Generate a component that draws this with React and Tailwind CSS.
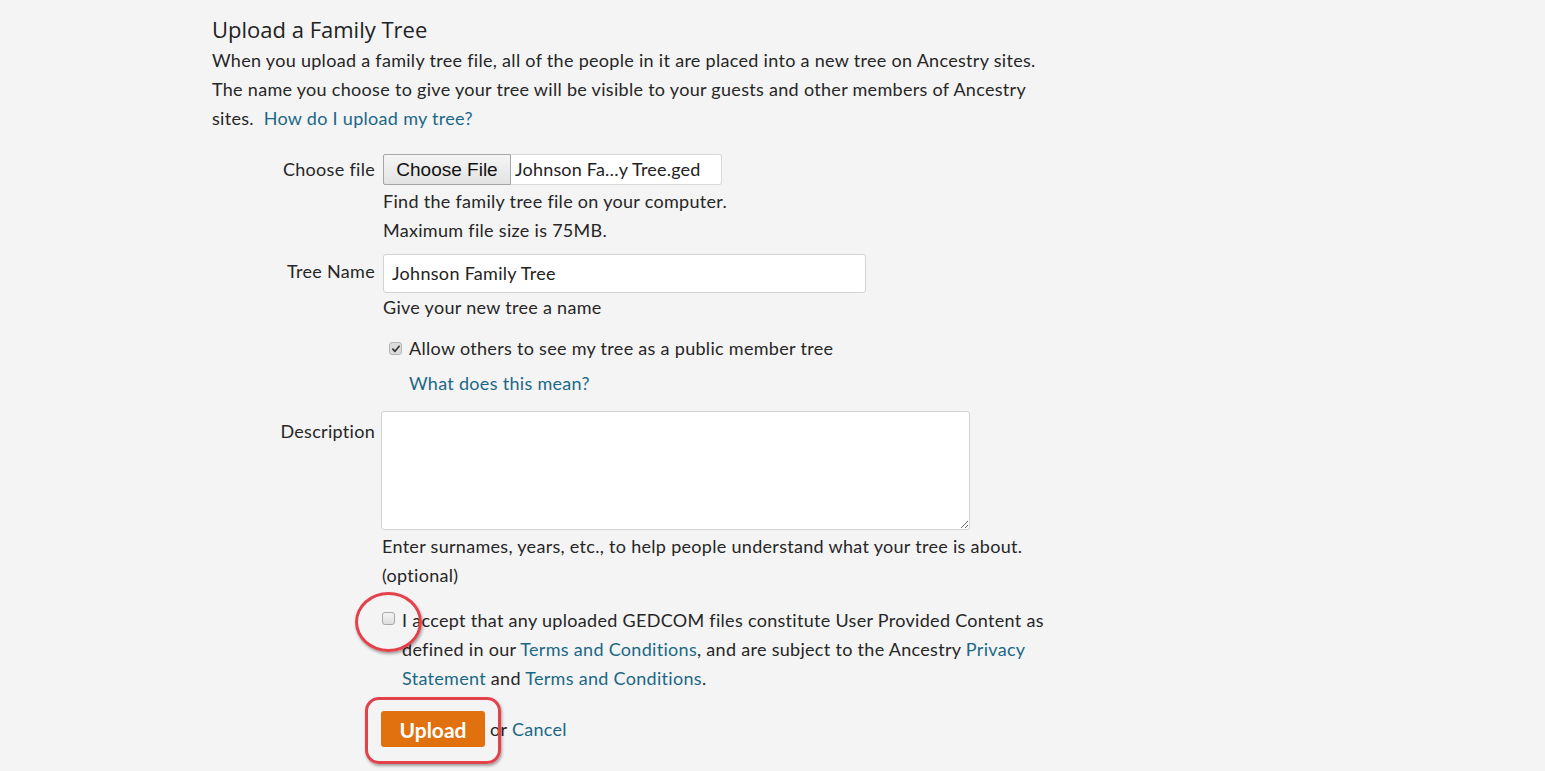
import React from 'react';

const Check = ({ checked }) => (
  <span
    className={`inline-flex items-center justify-center w-[13px] h-[13px] rounded-[3px] border ${
      checked ? 'bg-[#dcdcdc] border-[#b5b5b5]' : 'bg-gradient-to-b from-[#f4f4f4] to-[#dedede] border-[#a9a9a9]'
    }`}
  >
    {checked && (
      <svg viewBox="0 0 12 12" className="w-[10px] h-[10px]">
        <path d="M2.2 6.2 L4.8 8.8 L9.8 2.8" fill="none" stroke="#333" strokeWidth="2" strokeLinecap="round" strokeLinejoin="round" />
      </svg>
    )}
  </span>
);

const Label = ({ children, className = '' }) => (
  <div className={`w-[171px] shrink-0 text-right pr-2 ${className}`}>{children}</div>
);

export default function App() {
  return (
    <div className="min-h-[771px] bg-[#f4f4f4] text-[#262626] font-['Lato','Liberation_Sans',sans-serif] text-[18px] tracking-[0.3px] leading-[29px]">
      <div className="w-[900px] ml-[212px] pt-[15px] relative whitespace-nowrap">
        <h2 className="text-[22px] leading-[28px] tracking-normal text-[#222] font-['Open_Sans','Noto_Sans',sans-serif] mb-[3px]">Upload a Family Tree</h2>
        <p>
          When you upload a family tree file, all of the people in it are placed into a new tree on Ancestry sites.
          <br />
          The name you choose to give your tree will be visible to your guests and other members of Ancestry
          <br />
          sites.&nbsp; <a className="text-[#1b6886]">How do I upload my tree?</a>
        </p>

        {/* Choose file */}
        <div className="flex mt-[21px] -ml-[212px] pl-[212px]">
          <Label className="pt-[1px]">Choose file</Label>
          <div>
            <div className="flex h-[31px] tracking-normal">
              <span className="flex items-center w-[128px] justify-center border border-[#a6a6a6] rounded-l-[2px] bg-gradient-to-b from-[#f5f5f5] to-[#e3e3e3] font-['Liberation_Sans',Arial,sans-serif] text-[19px] text-[#111]">
                Choose File
              </span>
              <span className="flex items-center px-[4px] w-[211px] bg-white border border-l-0 border-[#d8d8d8] rounded-r-[3px] text-[18px] tracking-[0.2px] text-[#222] whitespace-nowrap">
                Johnson Fa…y Tree.ged
              </span>
            </div>
            <div className="mt-[2px]">Find the family tree file on your computer.</div>
            <div>Maximum file size is 75MB.</div>
          </div>
        </div>

        {/* Tree name */}
        <div className="flex mt-[9px] -ml-[212px] pl-[212px]">
          <Label className="pt-[3px]">Tree Name</Label>
          <div>
            <div className="w-[483px] h-[39px] bg-white border border-[#d3d3d3] rounded-[3px] flex items-center px-[8px] text-[#222]">
              Johnson Family Tree
            </div>
            <div>Give your new tree a name</div>
            <div className="flex items-center mt-[12px] ml-[6px]">
              <Check checked />
              <span className="ml-[7px]">Allow others to see my tree as a public member tree</span>
            </div>
            <div className="mt-[6px] ml-[26px]">
              <a className="text-[#1b6886]">What does this mean?</a>
            </div>
          </div>
        </div>

        {/* Description */}
        <div className="flex mt-[13px] -ml-[212px] pl-[212px]">
          <Label className="pt-[6px]">Description</Label>
          <div className="-ml-[2px]">
            <textarea className="block w-[589px] h-[119px] bg-white border border-[#d3d3d3] rounded-[3px] outline-none resize" />
            <div className="mt-[2px] ml-[1px]">Enter surnames, years, etc., to help people understand what your tree is about.</div>
            <div className="ml-[1px]">(optional)</div>
          </div>
        </div>

        {/* Accept */}
        <div className="flex mt-[16px] -ml-[212px] pl-[212px]">
          <Label />
          <div className="flex items-start -ml-[1px]">
            <span className="flex mt-[6px]">
              <Check />
            </span>
            <p className="ml-[7px]">
              I accept that any uploaded GEDCOM files constitute User Provided Content as
              <br />
              defined in our <a className="text-[#1b6886]">Terms and Conditions</a>, and are subject to the Ancestry{' '}
              <a className="text-[#1b6886]">Privacy</a>
              <br />
              <a className="text-[#1b6886]">Statement</a> and <a className="text-[#1b6886]">Terms and Conditions</a>.
            </p>
          </div>
        </div>

        {/* Upload */}
        <div className="flex mt-[18px] -ml-[212px] pl-[212px] pb-[20px]">
          <Label />
          <div className="flex items-center -ml-[2px]">
            <button className="h-[36px] w-[104px] rounded-[3px] bg-[#e1700f] text-white font-bold text-[21px] tracking-normal">Upload</button>
            <span className="ml-[5px]">or <a className="text-[#1b6886]">Cancel</a></span>
          </div>
        </div>

        {/* Annotations */}
        <div className="absolute left-[143px] top-[592px] w-[67px] h-[60px] rounded-[50%] border-[3px] border-[#e3424b] shadow-[1px_2px_3px_rgba(0,0,0,0.35)]" />
        <div className="absolute left-[153px] top-[697px] w-[136px] h-[67px] rounded-[14px] border-[3px] border-[#e3424b] shadow-[1px_2px_3px_rgba(0,0,0,0.35)]" />
      </div>
    </div>
  );
}
